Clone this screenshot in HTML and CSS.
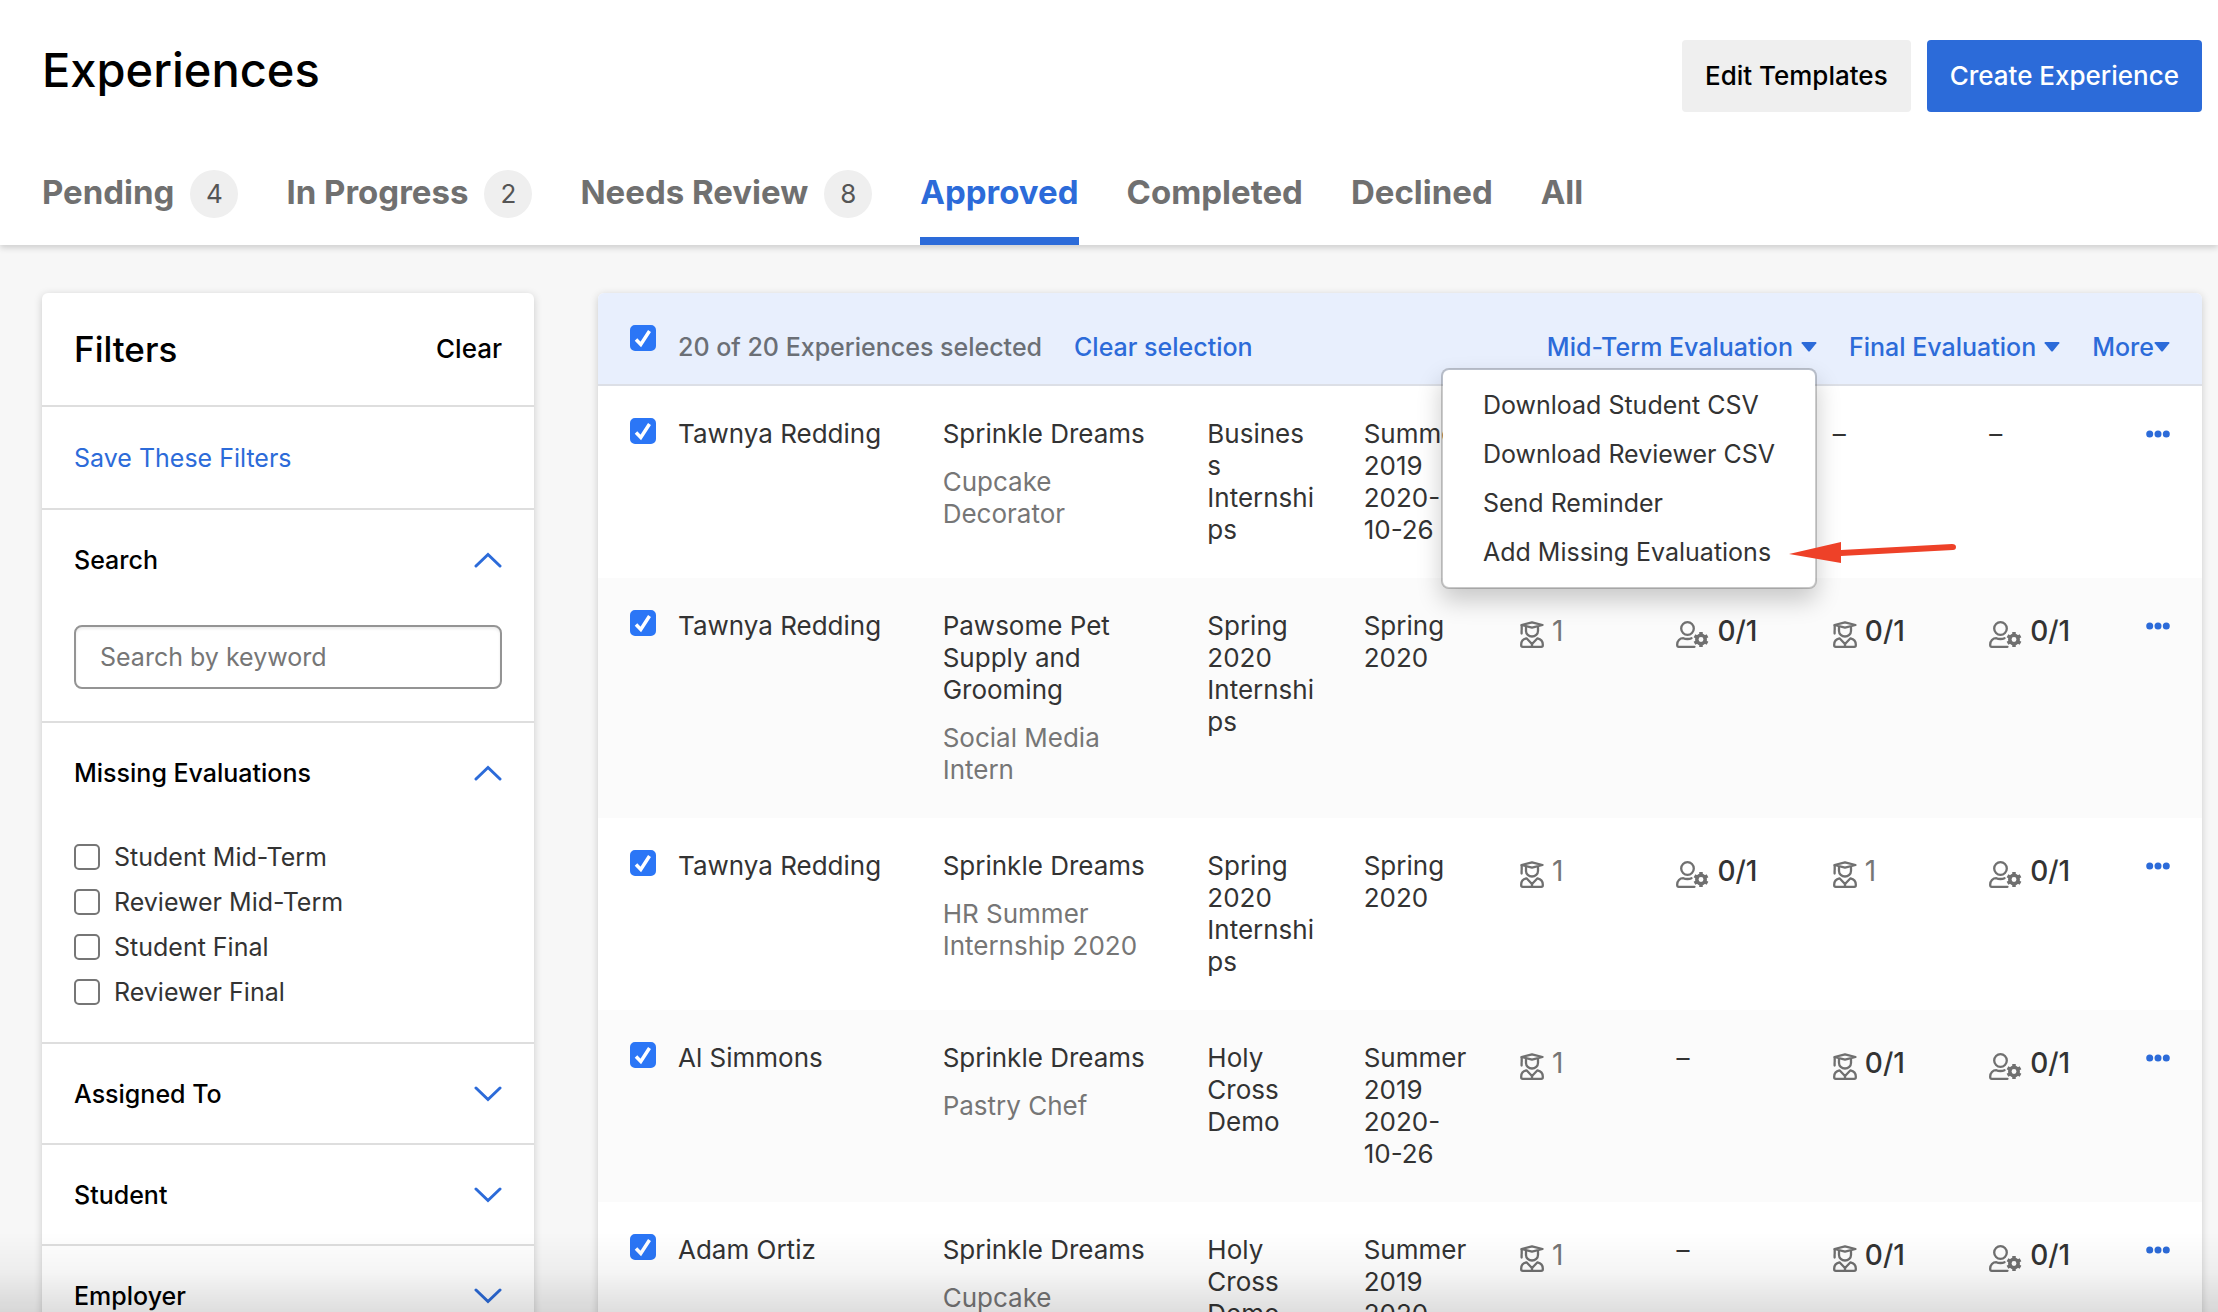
FILE: index.html
```
<!DOCTYPE html>
<html lang="en">

<head>
    <meta charset="UTF-8">
    <meta name="viewport" content="width=device-width, initial-scale=1.0">
    <title>Experiences</title>
    <link rel="stylesheet" href="styles.css">
</head>

<body>
    <!-- Shared icons -->
    <svg class="icon-defs" aria-hidden="true">
        <symbol id="icon-student" viewBox="0 0 24 27">
            <g fill="none" stroke="currentColor" stroke-width="2.3" stroke-linejoin="round" stroke-linecap="round">
                <path d="M1.5 4 12 1.3 22.5 4 12 6.7Z" />
                <path d="M1.7 4.5V9M1.6 9.5v3" />
                <path d="M6 6.5V10a6 5.5 0 0 0 12 0V6.5" />
                <path d="M6.5 17.3C3.2 18 1.2 20.5 1.2 23.5V24.3Q1.2 25.8 2.7 25.8H21.3Q22.8 25.8 22.8 24.3V23.5C22.8 20.5 20.8 18 17.5 17.3L12 23Z" />
                <path d="M12 23v3" />
            </g>
        </symbol>
        <symbol id="icon-reviewer" viewBox="0 0 33 27">
            <g fill="none" stroke="currentColor" stroke-width="2.3" stroke-linejoin="round" stroke-linecap="round">
                <circle cx="11.5" cy="7.5" r="6.3" />
                <path d="M18.5 25.8H2.7Q1.2 25.8 1.2 24.3V23.5C1.2 20 3.8 17.2 7.3 17.2Q9 18 11.5 18Q13.8 18 15.5 17.2" />
            </g>
            <circle cx="25" cy="18.5" r="4.2" fill="none" stroke="currentColor" stroke-width="3.5" />
            <path stroke="currentColor" stroke-width="3.5"
                d="M25 11v3M25 23v3M18.5 14.75l2.6 1.5M28.9 20.75l2.6 1.5M18.5 22.25l2.6-1.5M28.9 16.25l2.6-1.5" />
        </symbol>
        <symbol id="icon-up" viewBox="0 0 28 16">
            <path d="M2 14 14 2.5 26 14" fill="none" stroke="currentColor" stroke-width="3" stroke-linecap="round" />
        </symbol>
        <symbol id="icon-down" viewBox="0 0 28 16">
            <path d="M2 2 14 13.5 26 2" fill="none" stroke="currentColor" stroke-width="3" stroke-linecap="round" />
        </symbol>
        <symbol id="icon-dots" viewBox="0 0 24 8">
            <circle cx="3.7" cy="4" r="3.5" />
            <circle cx="12" cy="4" r="3.5" />
            <circle cx="20.3" cy="4" r="3.5" />
        </symbol>
        <symbol id="icon-caret" viewBox="0 0 16 10">
            <path d="M1.5 0h13Q16 0 15.3 1.3L9 9Q8 10 7 9L.7 1.3Q0 0 1.5 0Z" />
        </symbol>
    </svg>

    <header class="page-header">
        <div class="title-bar">
            <h1>Experiences</h1>
            <div class="actions">
                <button type="button" class="btn">Edit Templates</button>
                <button type="button" class="btn btn-primary">Create Experience</button>
            </div>
        </div>
        <nav class="tabs">
            <a href="#pending" class="tab">Pending <span class="count">4</span></a>
            <a href="#in-progress" class="tab">In Progress <span class="count">2</span></a>
            <a href="#needs-review" class="tab">Needs Review <span class="count">8</span></a>
            <a href="#approved" class="tab active" aria-current="page">Approved</a>
            <a href="#completed" class="tab">Completed</a>
            <a href="#declined" class="tab">Declined</a>
            <a href="#all" class="tab">All</a>
        </nav>
    </header>

    <div class="content">
        <aside class="filters card">
            <div class="filters-header">
                <h2>Filters</h2>
                <button type="button" class="clear-btn">Clear</button>
            </div>
            <div class="filters-save">
                <a href="#save">Save These Filters</a>
            </div>
            <section class="filter-group">
                <button type="button" class="filter-toggle" aria-expanded="true">Search
                    <svg class="chevron"><use href="#icon-up" /></svg>
                </button>
                <div class="filter-body">
                    <input type="text" class="search-input" placeholder="Search by keyword" aria-label="Search by keyword">
                </div>
            </section>
            <section class="filter-group">
                <button type="button" class="filter-toggle" aria-expanded="true">Missing Evaluations
                    <svg class="chevron"><use href="#icon-up" /></svg>
                </button>
                <div class="filter-body filter-options">
                    <label class="option"><input type="checkbox" class="checkbox">Student Mid-Term</label>
                    <label class="option"><input type="checkbox" class="checkbox">Reviewer Mid-Term</label>
                    <label class="option"><input type="checkbox" class="checkbox">Student Final</label>
                    <label class="option"><input type="checkbox" class="checkbox">Reviewer Final</label>
                </div>
            </section>
            <section class="filter-group">
                <button type="button" class="filter-toggle" aria-expanded="false">Assigned To
                    <svg class="chevron"><use href="#icon-down" /></svg>
                </button>
            </section>
            <section class="filter-group">
                <button type="button" class="filter-toggle" aria-expanded="false">Student
                    <svg class="chevron"><use href="#icon-down" /></svg>
                </button>
            </section>
            <section class="filter-group">
                <button type="button" class="filter-toggle" aria-expanded="false">Employer
                    <svg class="chevron"><use href="#icon-down" /></svg>
                </button>
            </section>
        </aside>

        <main class="results card">
            <div class="bulk-bar">
                <input type="checkbox" class="checkbox" checked aria-label="Select all">
                <div class="bulk-text">
                    <span>20 of 20 Experiences selected</span>
                    <button type="button" class="link-btn">Clear selection</button>
                </div>
                <div class="bulk-actions">
                    <div class="dropdown">
                        <button type="button" class="link-btn" aria-expanded="true">Mid-Term Evaluation
                            <svg class="caret"><use href="#icon-caret" /></svg>
                        </button>
                        <div class="menu">
                            <button type="button" class="menu-item">Download Student CSV</button>
                            <button type="button" class="menu-item">Download Reviewer CSV</button>
                            <button type="button" class="menu-item">Send Reminder</button>
                            <button type="button" class="menu-item">Add Missing Evaluations</button>
                            <svg class="arrow" viewBox="0 0 170 24" aria-hidden="true">
                                <path d="M0 13 52 1V9L163 3Q167 3 167 6T164 9L52 15V22Z" />
                            </svg>
                        </div>
                    </div>
                    <button type="button" class="link-btn">Final Evaluation
                        <svg class="caret"><use href="#icon-caret" /></svg>
                    </button>
                    <button type="button" class="link-btn tight">More
                        <svg class="caret"><use href="#icon-caret" /></svg>
                    </button>
                </div>
            </div>

            <table>
                <colgroup>
                    <col class="col-check">
                    <col class="col-wide">
                    <col class="col-wide">
                    <col span="6" class="col-narrow">
                    <col class="col-more">
                </colgroup>
                <tbody>
                    <tr>
                        <td class="cell-check"><input type="checkbox" class="checkbox" checked aria-label="Select row"></td>
                        <td>Tawnya Redding</td>
                        <td>Sprinkle Dreams<p class="job">Cupcake Decorator</p></td>
                        <td>Business Internships</td>
                        <td>Summer 2019 2020-10-26</td>
                        <td></td>
                        <td></td>
                        <td>–</td>
                        <td>–</td>
                        <td class="cell-more"><button type="button" class="more-btn" aria-label="More"><svg class="dots"><use href="#icon-dots" /></svg></button></td>
                    </tr>
                    <tr>
                        <td class="cell-check"><input type="checkbox" class="checkbox" checked aria-label="Select row"></td>
                        <td>Tawnya Redding</td>
                        <td>Pawsome Pet Supply and Grooming<p class="job">Social Media Intern</p></td>
                        <td>Spring 2020 Internships</td>
                        <td>Spring 2020</td>
                        <td><span class="evals done"><svg class="student"><use href="#icon-student" /></svg>1</span></td>
                        <td><span class="evals"><svg class="reviewer"><use href="#icon-reviewer" /></svg>0/1</span></td>
                        <td><span class="evals"><svg class="student"><use href="#icon-student" /></svg>0/1</span></td>
                        <td><span class="evals"><svg class="reviewer"><use href="#icon-reviewer" /></svg>0/1</span></td>
                        <td class="cell-more"><button type="button" class="more-btn" aria-label="More"><svg class="dots"><use href="#icon-dots" /></svg></button></td>
                    </tr>
                    <tr>
                        <td class="cell-check"><input type="checkbox" class="checkbox" checked aria-label="Select row"></td>
                        <td>Tawnya Redding</td>
                        <td>Sprinkle Dreams<p class="job">HR Summer Internship 2020</p></td>
                        <td>Spring 2020 Internships</td>
                        <td>Spring 2020</td>
                        <td><span class="evals done"><svg class="student"><use href="#icon-student" /></svg>1</span></td>
                        <td><span class="evals"><svg class="reviewer"><use href="#icon-reviewer" /></svg>0/1</span></td>
                        <td><span class="evals done"><svg class="student"><use href="#icon-student" /></svg>1</span></td>
                        <td><span class="evals"><svg class="reviewer"><use href="#icon-reviewer" /></svg>0/1</span></td>
                        <td class="cell-more"><button type="button" class="more-btn" aria-label="More"><svg class="dots"><use href="#icon-dots" /></svg></button></td>
                    </tr>
                    <tr>
                        <td class="cell-check"><input type="checkbox" class="checkbox" checked aria-label="Select row"></td>
                        <td>Al Simmons</td>
                        <td>Sprinkle Dreams<p class="job">Pastry Chef</p></td>
                        <td>Holy Cross Demo</td>
                        <td>Summer 2019 2020-10-26</td>
                        <td><span class="evals done"><svg class="student"><use href="#icon-student" /></svg>1</span></td>
                        <td>–</td>
                        <td><span class="evals"><svg class="student"><use href="#icon-student" /></svg>0/1</span></td>
                        <td><span class="evals"><svg class="reviewer"><use href="#icon-reviewer" /></svg>0/1</span></td>
                        <td class="cell-more"><button type="button" class="more-btn" aria-label="More"><svg class="dots"><use href="#icon-dots" /></svg></button></td>
                    </tr>
                    <tr>
                        <td class="cell-check"><input type="checkbox" class="checkbox" checked aria-label="Select row"></td>
                        <td>Adam Ortiz</td>
                        <td>Sprinkle Dreams<p class="job">Cupcake Decorator</p></td>
                        <td>Holy Cross Demo</td>
                        <td>Summer 2019 2020-10-26</td>
                        <td><span class="evals done"><svg class="student"><use href="#icon-student" /></svg>1</span></td>
                        <td>–</td>
                        <td><span class="evals"><svg class="student"><use href="#icon-student" /></svg>0/1</span></td>
                        <td><span class="evals"><svg class="reviewer"><use href="#icon-reviewer" /></svg>0/1</span></td>
                        <td class="cell-more"><button type="button" class="more-btn" aria-label="More"><svg class="dots"><use href="#icon-dots" /></svg></button></td>
                    </tr>
                </tbody>
            </table>
        </main>
    </div>
</body>

</html>
```
FILE: styles.css
```
* {
    box-sizing: border-box;
}

body {
    margin: 0;
    height: 100vh;
    overflow: hidden;
    background-color: #f7f7f7;
    color: #333;
    font-family: Inter, "Liberation Sans", sans-serif;
    font-size: 26px;
    line-height: 32px;
}

/* fade at the bottom edge of the window */
body::after {
    content: '';
    position: fixed;
    left: 0;
    right: 0;
    bottom: 0;
    height: 80px;
    background: linear-gradient(rgba(0, 0, 0, 0), rgba(0, 0, 0, 0.04) 50%, rgba(0, 0, 0, 0.13));
    pointer-events: none;
}

h1,
h2,
p {
    margin: 0;
}

button {
    padding: 0;
    border: 0;
    background: none;
    color: inherit;
    font: inherit;
    cursor: pointer;
}

a {
    color: #2c6bd9;
    text-decoration: none;
}

svg {
    flex: none;
    fill: currentColor;
}

.icon-defs {
    display: none;
}

.card {
    background-color: #fff;
    border-radius: 6px;
    box-shadow: 0 2px 8px rgba(0, 0, 0, 0.18);
}

/* Header */
.page-header {
    padding: 40px 16px 0 42px;
    background-color: #fff;
    box-shadow: 0 3px 6px rgba(0, 0, 0, 0.16);
}

.title-bar {
    display: flex;
    justify-content: space-between;
    align-items: flex-start;
}

h1 {
    color: #000;
    font-size: 47px;
    font-weight: 500;
    line-height: 60px;
}

.actions {
    display: flex;
    gap: 16px;
}

.btn {
    height: 72px;
    padding: 0 23px;
    border-radius: 4px;
    background-color: #efefef;
    color: #000;
    font-weight: 500;
}

.btn-primary {
    background-color: #2c6bd9;
    color: #fff;
}

.tabs {
    display: flex;
    gap: 48px;
    height: 133px;
}

.tab {
    display: flex;
    gap: 16px;
    padding-top: 56px;
    border-bottom: 8px solid transparent;
    color: #707070;
    font-size: 33px;
    font-weight: 700;
    line-height: 48px;
}

.tab.active {
    color: #2c6bd9;
    border-bottom-color: #2c6bd9;
}

.count {
    width: 48px;
    height: 48px;
    margin-top: 2px;
    border-radius: 50%;
    background-color: #efefef;
    color: #555;
    font-size: 26px;
    font-weight: 400;
    text-align: center;
}

/* Layout */
.content {
    display: flex;
    align-items: flex-start;
    gap: 64px;
    padding: 48px 16px 0 42px;
}

/* Filters */
.filters {
    flex: none;
    width: 492px;
    font-size: 25px;
}

.filters-header {
    display: flex;
    justify-content: space-between;
    align-items: center;
    height: 112px;
    padding: 0 32px;
    color: #000;
}

h2 {
    font-size: 35px;
    font-weight: 500;
}

.clear-btn {
    font-size: 26px;
    font-weight: 500;
}

.filters-save {
    padding: 35px 32px 34px;
    border-top: 2px solid #dedede;
}

.filter-group {
    border-top: 2px solid #dedede;
}

.filter-toggle {
    display: flex;
    justify-content: space-between;
    align-items: center;
    width: 100%;
    height: 99px;
    padding: 0 32px;
    color: #000;
    font-weight: 500;
}

.chevron {
    width: 28px;
    height: 16px;
    color: #2c6bd9;
}

.filter-body {
    padding: 16px 32px 32px;
}

.search-input {
    width: 100%;
    height: 64px;
    padding: 0 24px;
    border: 2px solid #949494;
    border-radius: 8px;
    background-color: #fff;
    box-shadow: inset 0 2px 3px rgba(0, 0, 0, 0.08);
    color: #333;
    font: inherit;
}

.search-input::placeholder {
    color: #767676;
}

.filter-options {
    padding-top: 12px;
    padding-bottom: 28px;
}

.option {
    display: flex;
    align-items: center;
    gap: 14px;
    height: 45px;
}

.checkbox {
    appearance: none;
    flex: none;
    display: block;
    width: 26px;
    height: 26px;
    margin: 0;
    border: 2px solid #767676;
    border-radius: 5px;
    background-color: #fff;
}

.checkbox:checked {
    border-color: #2b76f6;
    background: #2b76f6 url("data:image/svg+xml,%3Csvg xmlns='http://www.w3.org/2000/svg' viewBox='0 0 22 22'%3E%3Cpath d='M4 12.5 8.8 17.5 17.5 4' fill='none' stroke='white' stroke-width='3.5'/%3E%3C/svg%3E") center / 22px 22px no-repeat;
}

/* Selected rows bar */
.results {
    flex: 1;
    min-width: 0;
}

.bulk-bar {
    display: flex;
    align-items: flex-start;
    height: 93px;
    padding: 32px;
    border-bottom: 2px solid #dcdfe6;
    border-radius: 6px 6px 0 0;
    background-color: #e8effd;
    color: #6b6f76;
    font-size: 25px;
    font-weight: 500;
}

.bulk-text {
    display: flex;
    gap: 32px;
    padding: 6px 0 0 22px;
}

.bulk-actions {
    display: flex;
    gap: 32px;
    margin-left: auto;
    padding-top: 6px;
}

.link-btn {
    display: flex;
    align-items: center;
    gap: 8px;
    color: #2c6bd9;
    white-space: nowrap;
}

.link-btn.tight {
    gap: 0;
}

.caret {
    width: 16px;
    height: 10px;
}

.dropdown {
    position: relative;
}

.menu {
    position: absolute;
    top: 37px;
    right: 0;
    z-index: 1;
    padding: 10px 40px 11px;
    border: 2px solid rgba(0, 0, 0, 0.2);
    border-radius: 8px;
    background-color: #fff;
    background-clip: padding-box;
    box-shadow: 0 12px 24px rgba(0, 0, 0, 0.2);
}

.menu-item {
    display: block;
    height: 49px;
    color: #333;
    font-weight: 400;
    white-space: nowrap;
}

/* points at the last menu item */
.arrow {
    position: absolute;
    left: calc(100% - 26px);
    bottom: 22px;
    width: 170px;
    height: 24px;
    color: #ee4128;
}

/* Table */
table {
    width: 100%;
    table-layout: fixed;
    border-collapse: collapse;
}

.col-check {
    width: 80px;
}

.col-wide {
    width: 16.5%;
}

.col-narrow {
    width: 9.75%;
}

td {
    padding: 32px 48px 32px 0;
    vertical-align: top;
    overflow-wrap: anywhere;
}

tr:nth-child(even) {
    background-color: #fbfbfb;
}

.cell-check {
    padding: 32px 0 32px 32px;
}

.cell-more {
    padding: 32px 32px 32px 0;
}

.job {
    margin-top: 16px;
    color: #767676;
}

.evals {
    display: flex;
    align-items: center;
    gap: 8px;
    height: 42px;
    font-size: 28px;
    font-weight: 500;
    white-space: nowrap;
}

.evals.done {
    color: #767676;
    font-weight: 400;
}

.evals svg {
    height: 27px;
    margin-top: 6px;
    color: #707070;
}

.student {
    width: 24px;
}

.reviewer {
    width: 33px;
}

.more-btn {
    display: flex;
    align-items: center;
    height: 32px;
}

.dots {
    width: 24px;
    height: 8px;
    color: #2c6bd9;
}
```
